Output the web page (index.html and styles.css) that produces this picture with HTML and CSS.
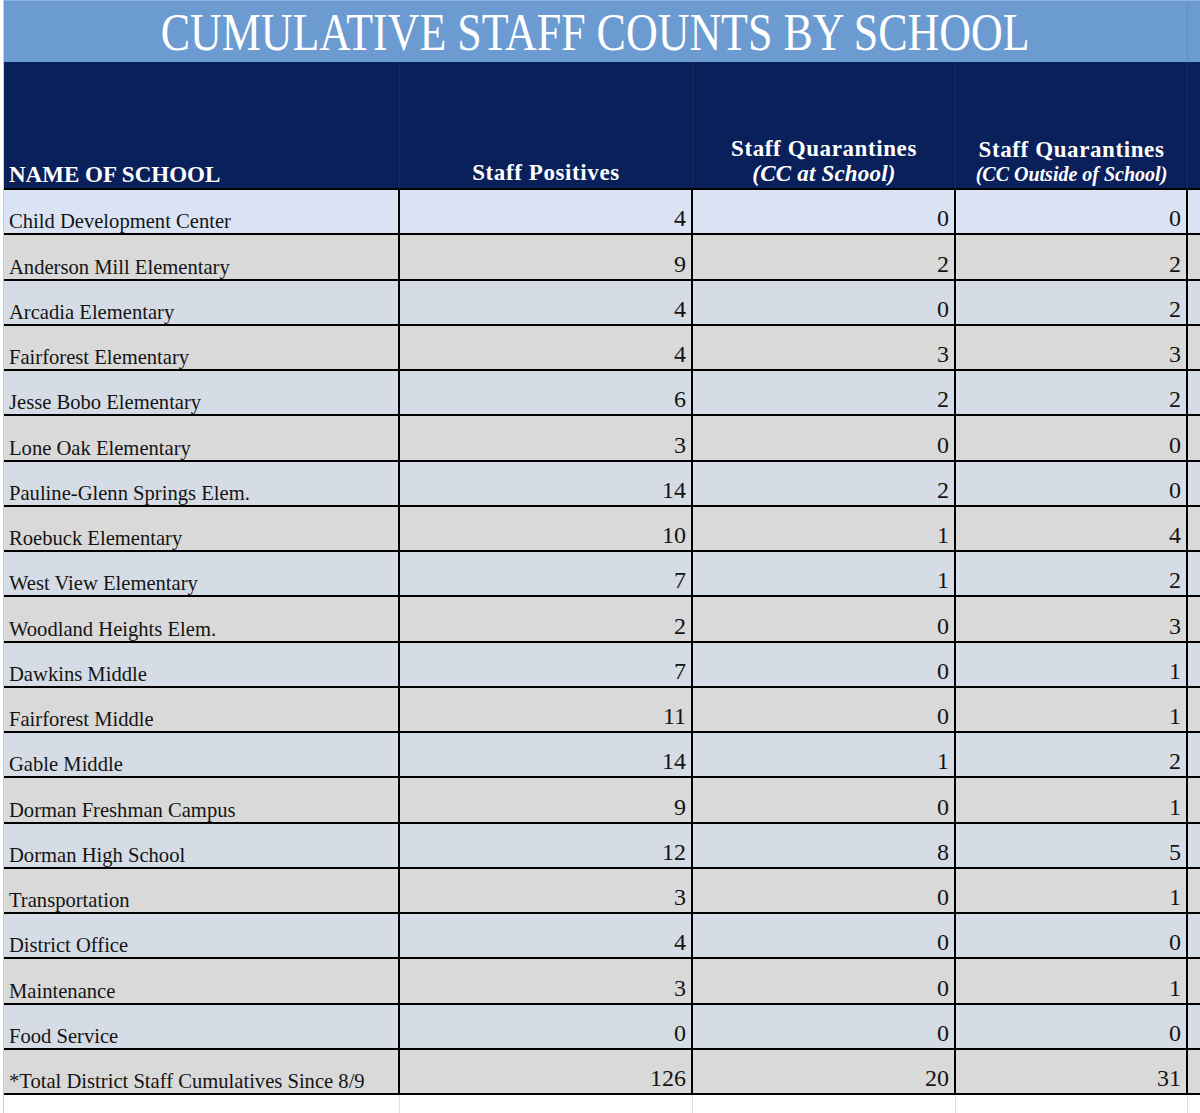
FILE: index.html
```html
<!DOCTYPE html>
<html lang="en">
<head>
<meta charset="utf-8">
<title>Cumulative Staff Counts by School</title>
<link rel="stylesheet" href="styles.css">
</head>
<body>
<div class="sheet">
  <div class="cols title-row">
    <div class="title-cell"><span class="title-text">CUMULATIVE STAFF COUNTS BY SCHOOL</span></div>
    <div class="extra"></div>
  </div>
  <div class="cols head-row">
    <div class="hcell hname">NAME OF SCHOOL</div>
    <div class="hcell hnum"><span class="hl">Staff Positives</span></div>
    <div class="hcell hnum"><span class="hl">Staff Quarantines</span><span class="hsub">(CC at School)</span></div>
    <div class="hcell hnum h4"><span class="hl">Staff Quarantines</span><span class="hsub small">(CC Outside of School)</span></div>
    <div class="hcell extra"></div>
  </div>

  <div class="cols row first"><div class="cell name">Child Development Center</div><div class="cell num">4</div><div class="cell num">0</div><div class="cell num">0</div><div class="cell extra"></div></div>
  <div class="cols row grey"><div class="cell name">Anderson Mill Elementary</div><div class="cell num">9</div><div class="cell num">2</div><div class="cell num">2</div><div class="cell extra"></div></div>
  <div class="cols row blue"><div class="cell name">Arcadia Elementary</div><div class="cell num">4</div><div class="cell num">0</div><div class="cell num">2</div><div class="cell extra"></div></div>
  <div class="cols row grey"><div class="cell name">Fairforest Elementary</div><div class="cell num">4</div><div class="cell num">3</div><div class="cell num">3</div><div class="cell extra"></div></div>
  <div class="cols row blue"><div class="cell name">Jesse Bobo Elementary</div><div class="cell num">6</div><div class="cell num">2</div><div class="cell num">2</div><div class="cell extra"></div></div>
  <div class="cols row grey"><div class="cell name">Lone Oak Elementary</div><div class="cell num">3</div><div class="cell num">0</div><div class="cell num">0</div><div class="cell extra"></div></div>
  <div class="cols row blue"><div class="cell name">Pauline-Glenn Springs Elem.</div><div class="cell num">14</div><div class="cell num">2</div><div class="cell num">0</div><div class="cell extra"></div></div>
  <div class="cols row grey"><div class="cell name">Roebuck Elementary</div><div class="cell num">10</div><div class="cell num">1</div><div class="cell num">4</div><div class="cell extra"></div></div>
  <div class="cols row blue"><div class="cell name">West View Elementary</div><div class="cell num">7</div><div class="cell num">1</div><div class="cell num">2</div><div class="cell extra"></div></div>
  <div class="cols row grey"><div class="cell name">Woodland Heights Elem.</div><div class="cell num">2</div><div class="cell num">0</div><div class="cell num">3</div><div class="cell extra"></div></div>
  <div class="cols row blue"><div class="cell name">Dawkins Middle</div><div class="cell num">7</div><div class="cell num">0</div><div class="cell num">1</div><div class="cell extra"></div></div>
  <div class="cols row grey"><div class="cell name">Fairforest Middle</div><div class="cell num">11</div><div class="cell num">0</div><div class="cell num">1</div><div class="cell extra"></div></div>
  <div class="cols row blue"><div class="cell name">Gable Middle</div><div class="cell num">14</div><div class="cell num">1</div><div class="cell num">2</div><div class="cell extra"></div></div>
  <div class="cols row grey"><div class="cell name">Dorman Freshman Campus</div><div class="cell num">9</div><div class="cell num">0</div><div class="cell num">1</div><div class="cell extra"></div></div>
  <div class="cols row blue"><div class="cell name">Dorman High School</div><div class="cell num">12</div><div class="cell num">8</div><div class="cell num">5</div><div class="cell extra"></div></div>
  <div class="cols row grey"><div class="cell name">Transportation</div><div class="cell num">3</div><div class="cell num">0</div><div class="cell num">1</div><div class="cell extra"></div></div>
  <div class="cols row blue"><div class="cell name">District Office</div><div class="cell num">4</div><div class="cell num">0</div><div class="cell num">0</div><div class="cell extra"></div></div>
  <div class="cols row grey"><div class="cell name">Maintenance</div><div class="cell num">3</div><div class="cell num">0</div><div class="cell num">1</div><div class="cell extra"></div></div>
  <div class="cols row blue"><div class="cell name">Food Service</div><div class="cell num">0</div><div class="cell num">0</div><div class="cell num">0</div><div class="cell extra"></div></div>
  <div class="cols row grey"><div class="cell name">*Total District Staff Cumulatives Since 8/9</div><div class="cell num">126</div><div class="cell num">20</div><div class="cell num">31</div><div class="cell extra"></div></div>

  <div class="cols tail"><div class="tcell"></div><div class="tcell"></div><div class="tcell"></div><div class="tcell"></div><div class="tcell extra"></div></div>
</div>
</body>
</html>
```

FILE: styles.css
```css
* { box-sizing: border-box; margin: 0; padding: 0; }
html, body { background: #fff; }
body {
  width: 1200px;
  height: 1113px;
  overflow: hidden;
  font-family: "Liberation Serif", "Times New Roman", serif;
  color: #141414;
}
.sheet {
  margin-left: 3px;
  border-left: 1px solid #c9c9c9;
  min-height: 1113px;
}
.cols {
  display: grid;
  grid-template-columns: 396px 293px 263px 232px 1fr;
}

/* title band */
.title-row {
  height: 62px;
  background: #6b9bd1;
  border-top: 1px solid #8fb3dc;
}
.title-cell {
  grid-column: 1 / 5;
  display: flex;
  align-items: center;
  justify-content: center;
  padding-top: 2px;
  border-right: 1px solid #5f8ec5;
}
.title-text {
  display: inline-block;
  color: #fff;
  font-size: 52px;
  line-height: 52px;
  white-space: nowrap;
  transform: scaleX(0.845);
}

/* header */
.head-row {
  height: 128px;
  background: #0a205b;
  border-bottom: 2px solid #000;
  color: #fff;
  font-weight: bold;
}
.hcell {
  display: flex;
  flex-direction: column;
  justify-content: flex-end;
  border-right: 1px solid #1b2d62;
  padding-bottom: 2px;
}
.hcell.extra { border-right: none; }
.hname {
  font-size: 23px;
  line-height: 25px;
  padding-left: 5px;
  padding-bottom: 1px;
}
.hnum {
  align-items: center;
  text-align: center;
  font-size: 23px;
  letter-spacing: 0.6px;
}
.hl { display: block; line-height: 26px; }
.hsub {
  display: block;
  font-style: italic;
  line-height: 24px;
  letter-spacing: 0.2px;
}
.h4 .hl { line-height: 25px; }
.hsub.small { font-size: 20px; line-height: 24px; letter-spacing: 0; }

/* data rows */
.row {
  height: 45.25px;
  border-bottom: 2px solid #000;
}
.row.first { background: #dae3f3; }
.row.blue { background: #d6dce5; }
.row.grey { background: #d9d9d9; }
.cell {
  display: flex;
  align-items: flex-end;
  border-right: 2px solid #000;
}
.cell.extra { border-right: none; }
.name {
  font-size: 20.6px;
  line-height: 24px;
  padding-left: 5px;
  white-space: nowrap;
}
.num {
  justify-content: flex-end;
  font-size: 24px;
  line-height: 26px;
  padding-right: 5px;
  padding-bottom: 2px;
}

/* empty grid below */
.tail { height: 20px; }
.tcell { border-right: 1px solid #e1e1e1; }
.tcell.extra { border-right: none; }
```
